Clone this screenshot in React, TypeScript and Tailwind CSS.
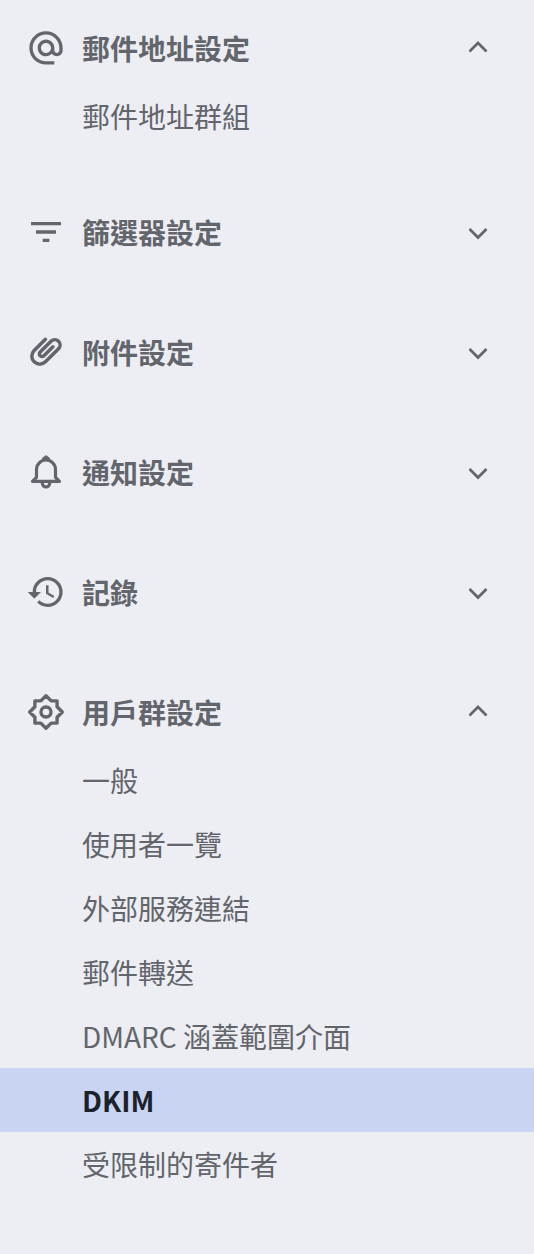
import { useState } from "react";
import type { ReactNode } from "react";
import clsx from "clsx";

type Section = {
  id: string;
  title: string;
  icon: ReactNode;
  items: string[];
};

const AtIcon = () => (
  <svg viewBox="0 0 24 24" className="size-10 shrink-0" fill="currentColor" aria-hidden="true">
    <path d="M12 1.95c-5.52 0-10 4.48-10 10s4.48 10 10 10h5v-2h-5c-4.34 0-8-3.66-8-8s3.66-8 8-8 8 3.66 8 8v1.43c0 .79-.71 1.57-1.5 1.57s-1.5-.78-1.5-1.57v-1.43c0-2.76-2.24-5-5-5s-5 2.24-5 5 2.24 5 5 5c1.38 0 2.64-.56 3.54-1.47.65.89 1.77 1.47 2.96 1.47 1.97 0 3.5-1.6 3.5-3.57v-1.43c0-5.52-4.48-10-10-10zm0 13c-1.66 0-3-1.34-3-3s1.34-3 3-3 3 1.34 3 3-1.34 3-3 3z" />
  </svg>
);

const FilterIcon = () => (
  <svg viewBox="0 0 24 24" className="size-10 shrink-0" fill="currentColor" aria-hidden="true">
    <path d="M10 18h4v-2h-4v2zM3 6v2h18V6H3zm3 7h12v-2H6v2z" />
  </svg>
);

const ClipIcon = () => (
  <svg viewBox="0 0 24 24" className="size-10 shrink-0" fill="none" stroke="currentColor" strokeWidth="2" strokeLinecap="round" aria-hidden="true">
    <g transform="translate(11.8 11.3) rotate(-45) scale(1.06 -1.06) translate(-12 -12.3)">
      <path d="M16.5 17H7.5a4.5 4.5 0 0 1 0-9H18a3 3 0 0 1 0 6H9.3a1.5 1.5 0 0 1 0-3h7.2" />
    </g>
  </svg>
);

const BellIcon = () => (
  <svg viewBox="0 0 40 40" className="size-10 shrink-0" fill="none" stroke="currentColor" strokeWidth="3.2" strokeLinejoin="round" aria-hidden="true">
    <path d="M6.5 29.3 10.5 25.3V17.5a9.5 9.5 0 0 1 19 0v7.8L33.5 29.3z" />
    <path d="M16.300 30.500v.8a3.700 3.700 0 0 0 7.400 0v-.8" />
    <path d="M17.500 7 20 5l2.500 2z" />
  </svg>
);

const HistoryIcon = () => (
  <svg viewBox="0 0 24 24" className="size-10 shrink-0" fill="currentColor" aria-hidden="true">
    <path d="M13 3c-4.97 0-9 4.03-9 9H1l3.89 3.89.07.14L9 12H6c0-3.87 3.13-7 7-7s7 3.13 7 7-3.13 7-7 7c-1.93 0-3.68-.79-4.94-2.06l-1.42 1.42C8.27 19.99 10.51 21 13 21c4.97 0 9-4.03 9-9s-4.03-9-9-9zm-1 5v5l4.28 2.54.72-1.21-3.5-2.08V8H12z" />
  </svg>
);

const GearIcon = () => (
  <svg viewBox="0 0 40 40" className="size-10 shrink-0" fill="none" stroke="currentColor" strokeWidth="3.4" strokeLinejoin="round" aria-hidden="true">
    <path d="M20 3.7 25.2 8.9H31.1V14.8L36.3 20 31.1 25.2V31.1H25.2L20 36.3 14.8 31.1H8.9V25.2L3.7 20 8.9 14.8V8.9H14.8z" />
    <circle cx="20" cy="20" r="5" />
  </svg>
);

const Chevron = ({ open }: { open: boolean }) => (
  <svg viewBox="0 0 40 40" className="size-10 shrink-0" fill="none" stroke="currentColor" strokeWidth="2.7" aria-hidden="true">
    <path d={open ? "M11.5 23.5 20 15l8.5 8.5" : "M11.5 17 20 25.5 28.5 17"} />
  </svg>
);

const sections: Section[] = [
  { id: "address", title: "郵件地址設定", icon: <AtIcon />, items: ["郵件地址群組"] },
  { id: "filter", title: "篩選器設定", icon: <FilterIcon />, items: [] },
  { id: "attachment", title: "附件設定", icon: <ClipIcon />, items: [] },
  { id: "notification", title: "通知設定", icon: <BellIcon />, items: [] },
  { id: "log", title: "記錄", icon: <HistoryIcon />, items: [] },
  {
    id: "group",
    title: "用戶群設定",
    icon: <GearIcon />,
    items: ["一般", "使用者一覽", "外部服務連結", "郵件轉送", "DMARC 涵蓋範圍介面", "DKIM", "受限制的寄件者"],
  },
];

const App = () => {
  const [open, setOpen] = useState<string[]>(["address", "group"]);
  const [active, setActive] = useState("DKIM");

  const toggle = (id: string) =>
    setOpen((prev) => (prev.includes(id) ? prev.filter((s) => s !== id) : [...prev, id]));

  return (
    <nav
      lang="zh-Hant"
      className="min-h-screen bg-[#edeef3] pt-4 font-['Noto_Sans_CJK_TC','Noto_Sans_CJK_JP',sans-serif] text-[28px] leading-10 text-[#62656b]"
    >
      {sections.map(({ id, title, icon, items }) => {
        const isOpen = open.includes(id);
        return (
          <section key={id} className="pb-13">
            <button
              type="button"
              aria-expanded={isOpen}
              onClick={() => toggle(id)}
              className="mb-1 flex h-16 w-full items-center gap-4 pr-9 pl-[26px] text-left font-bold"
            >
              {icon}
              <span className="flex-1">{title}</span>
              <Chevron open={isOpen} />
            </button>
            {isOpen && items.length > 0 && (
              <ul>
                {items.map((item) => (
                  <li key={item}>
                    <a
                      href="#"
                      aria-current={item === active ? "page" : undefined}
                      onClick={() => setActive(item)}
                      className={clsx(
                        "flex h-16 items-center pr-9 pl-[82px]",
                        item === active && "bg-[#c9d4f2] font-bold text-[#1c212c]"
                      )}
                    >
                      {item}
                    </a>
                  </li>
                ))}
              </ul>
            )}
          </section>
        );
      })}
    </nav>
  );
};

export default App;
